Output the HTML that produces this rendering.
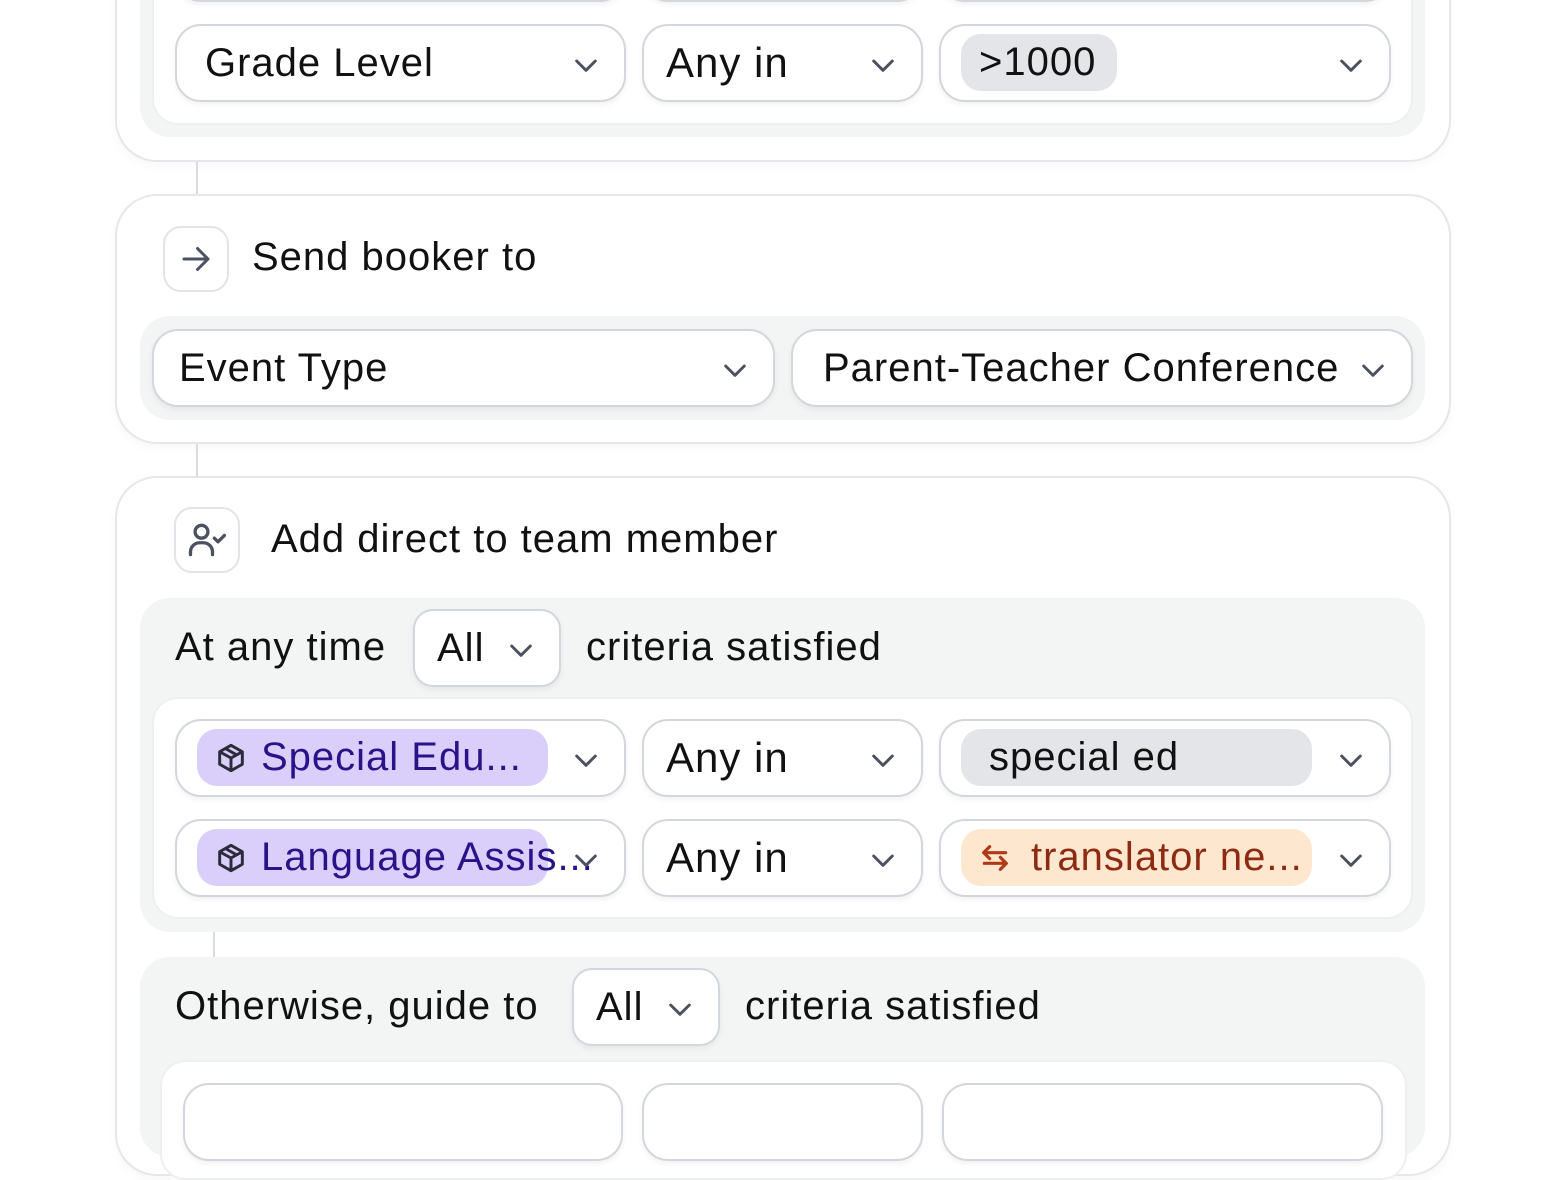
<!DOCTYPE html><html><head><style>
*{box-sizing:border-box;margin:0;padding:0}
body{width:1560px;height:1095px;overflow:hidden;background:#fff;font-family:"Liberation Sans",sans-serif;color:#111;position:relative;letter-spacing:1px}
.card{position:absolute;left:115px;width:1336px;border:2px solid #e6e7ea;border-radius:42px;background:#fff;box-shadow:0 4px 10px rgba(0,0,0,.03)}
.gray{position:absolute;left:140px;width:1285px;background:#f3f4f4;border-radius:30px}
.white{position:absolute;background:#fff;border-radius:26px;border:2px solid #eeefef}
.dd{position:absolute;height:78px;border:2px solid #d3d6dc;border-radius:26px;background:#fff;box-shadow:0 3px 6px rgba(0,0,0,.05);font-size:40px;display:flex;align-items:center;padding-left:28px;white-space:nowrap}
.dd svg.ch{position:absolute;right:22px;top:23px}
.chip{position:absolute;top:8px;height:57px;border-radius:20px;display:flex;align-items:center;font-size:40px;white-space:nowrap}
.chip svg{flex-shrink:0}
.t{position:absolute;font-size:40px;white-space:nowrap;line-height:1}
.ib{position:absolute;width:66px;height:66px;border:2px solid #e3e4e7;border-radius:18px;background:#fff;display:flex;align-items:center;justify-content:center}
.ln{position:absolute;width:2px;background:#d9dbde}
</style></head><body>
<svg width="0" height="0" style="position:absolute"><defs>
<symbol id="box" viewBox="0 0 24 24"><path d="M12 2.5l8.5 4.8v9.4L12 21.5l-8.5-4.8V7.3z M3.5 7.3L12 12l8.5-4.7 M12 12v9.5 M7.8 4.9l8.5 4.8" fill="none" stroke="#2b2b3a" stroke-width="2.2" stroke-linejoin="round"/></symbol></defs></svg>

<div class="card" style="top:-60px;height:222px"></div>
<div class="gray" style="top:-40px;height:177px"></div>
<div class="white" style="left:152px;width:1261px;top:-30px;height:155px"></div>
<div class="dd" style="left:175px;width:451px;top:-76px"></div>
<div class="dd" style="left:642px;width:281px;top:-76px"></div>
<div class="dd" style="left:939px;width:452px;top:-76px"></div>
<div class="dd" style="left:175px;width:451px;top:24px">Grade Level<svg class="ch" width="32" height="32" viewBox="0 0 24 24"><path d="M5 9l7 7 7-7" fill="none" stroke="#4b5160" stroke-width="2.2" stroke-linecap="round" stroke-linejoin="round"/></svg></div>
<div class="dd" style="left:642px;width:281px;top:24px;padding-left:22px;font-size:42px">Any in<svg class="ch" width="32" height="32" viewBox="0 0 24 24"><path d="M5 9l7 7 7-7" fill="none" stroke="#4b5160" stroke-width="2.2" stroke-linecap="round" stroke-linejoin="round"/></svg></div>
<div class="dd" style="left:939px;width:452px;top:24px"><div class="chip" style="left:20px;width:156px;background:#e4e5e8;padding-left:18px;font-size:40px">&gt;1000</div><svg class="ch" width="32" height="32" viewBox="0 0 24 24"><path d="M5 9l7 7 7-7" fill="none" stroke="#4b5160" stroke-width="2.2" stroke-linecap="round" stroke-linejoin="round"/></svg></div>

<div class="ln" style="left:196px;top:162px;height:32px"></div>

<div class="card" style="top:194px;height:250px"></div>
<div class="ib" style="left:163px;top:226px"><svg width="36" height="36" viewBox="0 0 24 24"><path d="M4 12h16M13 5l7 7-7 7" fill="none" stroke="#4b5160" stroke-width="2" stroke-linecap="round" stroke-linejoin="round"/></svg></div>
<div class="t" style="left:252px;top:237px">Send booker to</div>
<div class="gray" style="top:316px;height:104px"></div>
<div class="dd" style="left:152px;width:623px;top:329px;padding-left:25px">Event Type<svg class="ch" width="32" height="32" viewBox="0 0 24 24"><path d="M5 9l7 7 7-7" fill="none" stroke="#4b5160" stroke-width="2.2" stroke-linecap="round" stroke-linejoin="round"/></svg></div>
<div class="dd" style="left:791px;width:622px;top:329px;padding-left:30px">Parent-Teacher Conference<svg class="ch" width="32" height="32" viewBox="0 0 24 24"><path d="M5 9l7 7 7-7" fill="none" stroke="#4b5160" stroke-width="2.2" stroke-linecap="round" stroke-linejoin="round"/></svg></div>

<div class="ln" style="left:196px;top:444px;height:32px"></div>

<div class="card" style="top:476px;height:700px"></div>
<div class="ib" style="left:174px;top:507px"><svg width="44" height="44" viewBox="0 0 24 24" fill="none" stroke="#4b5160" stroke-width="1.8" stroke-linecap="round" stroke-linejoin="round"><circle cx="9" cy="7.5" r="3.5"/><path d="M3 20v-1.5a5 5 0 015-5h2a5 5 0 015 5V20"/><path d="M16 11l2 2 3.5-3.5"/></svg></div>
<div class="t" style="left:271px;top:519px">Add direct to team member</div>

<div class="gray" style="top:598px;height:334px"></div>
<div class="t" style="left:175px;top:627px">At any time</div>
<div class="dd" style="left:413px;width:148px;top:609px;padding-left:22px;border-radius:20px">All<svg class="ch" width="32" height="32" viewBox="0 0 24 24"><path d="M5 9l7 7 7-7" fill="none" stroke="#4b5160" stroke-width="2.2" stroke-linecap="round" stroke-linejoin="round"/></svg></div>
<div class="t" style="left:586px;top:627px">criteria satisfied</div>
<div class="white" style="left:152px;width:1261px;top:697px;height:222px"></div>

<div class="dd" style="left:175px;width:451px;top:719px"><div class="chip" style="left:20px;width:351px;background:#d9cffa;color:#2a1289;padding-left:18px"><svg width="32" height="32" style="margin-right:14px"><use href="#box" width="32" height="32"/></svg>Special Edu...</div><svg class="ch" width="32" height="32" viewBox="0 0 24 24"><path d="M5 9l7 7 7-7" fill="none" stroke="#4b5160" stroke-width="2.2" stroke-linecap="round" stroke-linejoin="round"/></svg></div>
<div class="dd" style="left:642px;width:281px;top:719px;padding-left:22px;font-size:42px">Any in<svg class="ch" width="32" height="32" viewBox="0 0 24 24"><path d="M5 9l7 7 7-7" fill="none" stroke="#4b5160" stroke-width="2.2" stroke-linecap="round" stroke-linejoin="round"/></svg></div>
<div class="dd" style="left:939px;width:452px;top:719px"><div class="chip" style="left:20px;width:351px;background:#e4e5e8;padding-left:28px">special ed</div><svg class="ch" width="32" height="32" viewBox="0 0 24 24"><path d="M5 9l7 7 7-7" fill="none" stroke="#4b5160" stroke-width="2.2" stroke-linecap="round" stroke-linejoin="round"/></svg></div>

<div class="dd" style="left:175px;width:451px;top:819px"><div class="chip" style="left:20px;width:351px;background:#d9cffa;color:#2a1289;padding-left:18px;overflow:visible"><svg width="32" height="32" style="margin-right:14px"><use href="#box" width="32" height="32"/></svg>Language Assis...</div><svg class="ch" width="32" height="32" viewBox="0 0 24 24"><path d="M5 9l7 7 7-7" fill="none" stroke="#4b5160" stroke-width="2.2" stroke-linecap="round" stroke-linejoin="round"/></svg></div>
<div class="dd" style="left:642px;width:281px;top:819px;padding-left:22px;font-size:42px">Any in<svg class="ch" width="32" height="32" viewBox="0 0 24 24"><path d="M5 9l7 7 7-7" fill="none" stroke="#4b5160" stroke-width="2.2" stroke-linecap="round" stroke-linejoin="round"/></svg></div>
<div class="dd" style="left:939px;width:452px;top:819px"><div class="chip" style="left:20px;width:351px;background:#fde8cf;color:#8e2a12;padding-left:18px"><svg width="32" height="32" viewBox="0 0 24 24" style="margin-right:20px" fill="none" stroke="#b03a18" stroke-width="2.4" stroke-linecap="round" stroke-linejoin="round"><path d="M20 8H4M8 3.5L3.5 8 8 12.5M4 16h16M16 11.5l4.5 4.5-4.5 4.5"/></svg>translator ne...</div><svg class="ch" width="32" height="32" viewBox="0 0 24 24"><path d="M5 9l7 7 7-7" fill="none" stroke="#4b5160" stroke-width="2.2" stroke-linecap="round" stroke-linejoin="round"/></svg></div>

<div class="ln" style="left:213px;top:932px;height:25px"></div>

<div class="gray" style="top:957px;height:200px"></div>
<div class="t" style="left:175px;top:986px">Otherwise, guide to</div>
<div class="dd" style="left:572px;width:148px;top:968px;padding-left:22px;border-radius:20px">All<svg class="ch" width="32" height="32" viewBox="0 0 24 24"><path d="M5 9l7 7 7-7" fill="none" stroke="#4b5160" stroke-width="2.2" stroke-linecap="round" stroke-linejoin="round"/></svg></div>
<div class="t" style="left:745px;top:986px">criteria satisfied</div>
<div class="white" style="left:160px;width:1247px;top:1060px;height:120px"></div>
<div class="dd" style="left:183px;width:440px;top:1083px"></div>
<div class="dd" style="left:642px;width:281px;top:1083px"></div>
<div class="dd" style="left:942px;width:441px;top:1083px"></div>
</body></html>
